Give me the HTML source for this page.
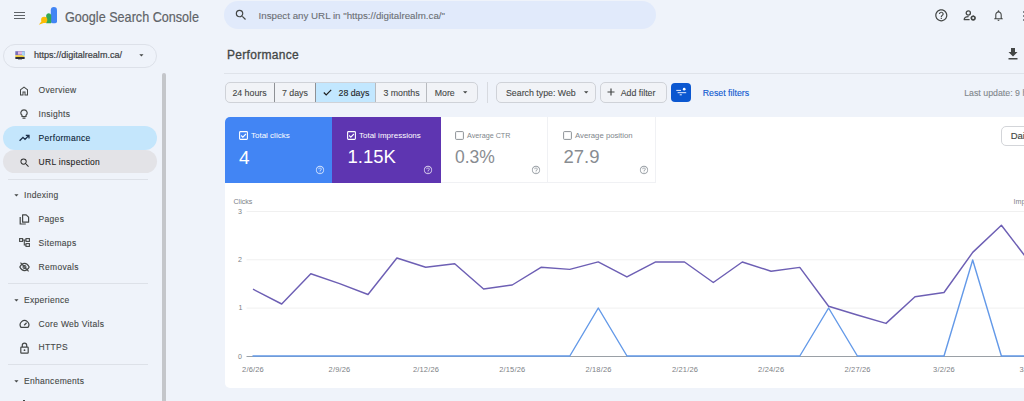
<!DOCTYPE html>
<html><head><meta charset="utf-8">
<style>
*{margin:0;padding:0;box-sizing:border-box;}
html,body{width:1024px;height:401px;overflow:hidden;background:#eff3fa;font-family:"Liberation Sans",sans-serif;color:#444746;}
.a{position:absolute;}
.t{position:absolute;white-space:nowrap;line-height:1;}
.nav{position:absolute;left:38.6px;font-size:8.5px;color:#444746;letter-spacing:0.3px;-webkit-text-stroke:0.1px currentColor;white-space:nowrap;line-height:1;}
.sec{position:absolute;left:24px;font-size:8.5px;color:#444746;letter-spacing:0.3px;-webkit-text-stroke:0.1px currentColor;white-space:nowrap;line-height:1;}
.div{position:absolute;left:8px;width:140px;height:1px;background:#dde1e8;}
.seg{position:absolute;white-space:nowrap;line-height:1;top:92.7px;font-size:8.8px;color:#444746;transform:translateY(-50%);-webkit-text-stroke:0.1px currentColor;}
</style></head><body>

<!-- hamburger -->
<div class="a" style="left:14px;top:11.9px;width:10.5px;height:1.3px;background:#5f6368"></div>
<div class="a" style="left:14px;top:14.9px;width:10.5px;height:1.3px;background:#5f6368"></div>
<div class="a" style="left:14px;top:17.9px;width:10.5px;height:1.3px;background:#5f6368"></div>

<!-- logo -->
<svg class="a" style="left:38px;top:6px" width="20" height="20" viewBox="0 0 20 20">
  <path d="M12.8 15.5V4.2A3.1 3.1 0 0 1 19 4.2V15.5A1.8 1.8 0 0 1 17.2 17.3H14.6A1.8 1.8 0 0 1 12.8 15.5Z" fill="#4285f4"/>
  <path d="M8.2 17.3V8.9A2.7 2.7 0 0 1 13.2 8.9V17.3Z" fill="#34a853"/>
  <circle cx="6.2" cy="13.9" r="3.1" fill="#fbbc04"/>
  <path d="M0.8 18.8L3.6 15.2L5.6 16.9Z" fill="#fbbc04"/>
</svg>
<div class="t" style="left:65px;top:9px;font-size:15px;color:#5f6368;transform-origin:0 0;transform:scaleX(0.841);-webkit-text-stroke:0.2px #5f6368">Google Search Console</div>

<!-- search bar -->
<div class="a" style="left:224px;top:1px;width:432px;height:28px;border-radius:14px;background:#e1eafb"></div>
<svg class="a" style="left:233.85px;top:8.3px" width="14" height="14" viewBox="0 0 24 24"><path fill="#444746" d="M15.5 14h-.79l-.28-.27A6.471 6.471 0 0 0 16 9.500 6.500 6.500 0 1 0 9.500 16c1.610 0 3.090-.59 4.230-1.570l.27.28v.79l5 4.990L20.490 19l-4.990-5zm-6 0C7.010 14 5 11.990 5 9.500S7.010 5 9.500 5 14 7.010 14 9.500 11.990 14 9.500 14z"/></svg>
<div class="t" style="left:258.5px;top:10.5px;font-size:9.75px;color:#6b6f74;-webkit-text-stroke:0.1px #6b6f74">Inspect any URL in "https://digitalrealm.ca/"</div>

<!-- top right icons -->
<svg class="a" style="left:933.8px;top:7.9px" width="14.6" height="14.6" viewBox="0 0 24 24"><path fill="#444746" d="M11 18h2v-2h-2v2zm1-16C6.480 2 2 6.480 2 12s4.480 10 10 10 10-4.480 10-10S17.520 2 12 2zm0 18c-4.410 0-8-3.590-8-8s3.590-8 8-8 8 3.590 8 8-3.590 8-8 8zm0-14c-2.210 0-4 1.790-4 4h2c0-1.100.9-2 2-2s2 .9 2 2c0 2-3 1.750-3 5h2c0-2.250 3-2.500 3-5 0-2.210-1.790-4-4-4z"/></svg>
<svg class="a" style="left:963px;top:10px" width="14" height="11" viewBox="0 0 14 11">
  <circle cx="5.3" cy="3" r="2.1" fill="none" stroke="#444746" stroke-width="1.3"/>
  <path d="M1.2 9.6C1.2 7.4 3.2 6.6 5.6 6.7" fill="none" stroke="#444746" stroke-width="1.3"/>
  <path d="M0.8 9.6H6.6" stroke="#444746" stroke-width="1.3"/>
  <circle cx="10.2" cy="8" r="1.8" fill="none" stroke="#444746" stroke-width="1.5"/>
  <path d="M10.2 5.4V6.2M10.2 9.8V10.6M7.6 8H8.4M12 8H12.8M8.4 6.2L8.9 6.7M11.5 9.3L12 9.8M12 6.2L11.5 6.7M8.9 9.3L8.4 9.8" stroke="#444746" stroke-width="1"/>
</svg>
<svg class="a" style="left:992px;top:8px" width="13" height="15" viewBox="0 0 24 24"><path fill="#444746" d="M12 22c1.100 0 2-.9 2-2h-4c0 1.100.89 2 2 2zm6-6v-5c0-3.070-1.640-5.640-4.500-6.320V4c0-.83-.67-1.500-1.500-1.500s-1.500.67-1.500 1.500v.68C7.630 5.360 6 7.920 6 11v5l-2 2v1h16v-1l-2-2zm-2 1H8v-6c0-2.480 1.510-4.500 4-4.500s4 2.020 4 4.500v6z"/></svg>
<div class="a" style="left:1022.5px;top:10.5px;width:2.5px;height:2.5px;border-radius:50%;background:#5f6368"></div>
<div class="a" style="left:1022.5px;top:14.5px;width:2.5px;height:2.5px;border-radius:50%;background:#5f6368"></div>
<div class="a" style="left:1022.5px;top:18.5px;width:2.5px;height:2.5px;border-radius:50%;background:#5f6368"></div>

<!-- property selector -->
<div class="a" style="left:2.5px;top:43.5px;width:154px;height:24px;border-radius:12px;border:1px solid #dde1e9;background:#eff3fa"></div>
<svg class="a" style="left:14.5px;top:50.5px" width="10" height="9" viewBox="0 0 10 9">
  <rect x="0.3" y="0.2" width="9.4" height="4" fill="#7a6fb8"/>
  <rect x="3" y="0.5" width="4" height="3" fill="#e3b6e0"/>
  <rect x="7" y="0.5" width="2.7" height="5" fill="#a9d4f5"/>
  <path d="M0.3 4.2H7.5L9.7 5.4V6H0.3Z" fill="#f4cf3a"/>
  <rect x="0.3" y="6" width="9.4" height="2" rx="0.4" fill="#2e2e36"/>
  <rect x="3" y="8" width="4" height="0.9" fill="#9a9aa0"/>
</svg>
<div class="t" style="left:34px;top:50.8px;font-size:9.05px;color:#3c4043;-webkit-text-stroke:0.2px #3c4043">https://digitalrealm.ca/</div>
<svg class="a" style="left:139px;top:54px" width="5" height="3" viewBox="0 0 5 3"><path d="M0.3 0.3H4.5L2.4 2.4Z" fill="#444746"/></svg>

<!-- scrollbar -->
<div class="a" style="left:161.5px;top:73px;width:4.5px;height:340px;border-radius:2px;background:#c4c6ca"></div>

<!-- nav -->
<div class="a" style="left:2.5px;top:126px;width:154px;height:24px;border-radius:12px;background:#c4e6fc"></div>
<div class="a" style="left:2.5px;top:150.2px;width:154px;height:23px;border-radius:11.5px;background:#e3e3e7"></div>

<svg class="a" style="left:18px;top:84.5px" width="12" height="12" viewBox="0 0 24 24"><path fill="#444746" d="M6 19h3v-6h6v6h3v-9l-6-4.500L6 10v9Zm-2 2V9l8-6 8 6v12h-7v-6h-2v6H4Z"/></svg>
<div class="nav" style="top:85.8px">Overview</div>
<svg class="a" style="left:20px;top:109px" width="8" height="10" viewBox="0 0 8 10"><path d="M4 0.8A3.1 3.1 0 0 1 6 6.3V7.5H2V6.3A3.1 3.1 0 0 1 4 0.8Z M2.5 9.2H5.5" fill="none" stroke="#444746" stroke-width="1.2"/></svg>
<div class="nav" style="top:109.8px">Insights</div>
<svg class="a" style="left:19px;top:134px" width="11" height="8" viewBox="0 0 11 8"><path d="M0.6 6.8L4 3.4L6 5.4L9.3 2 M6.8 1.3H10V4.5" fill="none" stroke="#1b2f4a" stroke-width="1.3"/></svg>
<div class="nav" style="top:133.8px;color:#0b1d35">Performance</div>
<svg class="a" style="left:18.6px;top:156.8px" width="11.6" height="11.6" viewBox="0 0 24 24"><path fill="#303030" d="M15.5 14h-.79l-.28-.27A6.471 6.471 0 0 0 16 9.500 6.500 6.500 0 1 0 9.500 16c1.610 0 3.090-.59 4.230-1.570l.27.28v.79l5 4.990L20.490 19l-4.990-5zm-6 0C7.010 14 5 11.990 5 9.500S7.010 5 9.500 5 14 7.010 14 9.500 11.990 14 9.500 14z"/></svg>
<div class="nav" style="top:157.8px;color:#1f1f1f">URL inspection</div>

<div class="div" style="top:179px"></div>
<svg class="a" style="left:13.5px;top:194px" width="5" height="3" viewBox="0 0 5 3"><path d="M0.3 0.3H4.5L2.4 2.4Z" fill="#444746"/></svg>
<div class="sec" style="top:190.5px">Indexing</div>
<svg class="a" style="left:18.5px;top:213.5px" width="11" height="11" viewBox="0 0 11 11"><path d="M3.6 0.8H7.2L9.6 3.2V8.2H3.6Z" fill="none" stroke="#444746" stroke-width="1.2" stroke-linejoin="round"/><path d="M1.2 3V10H6.8" fill="none" stroke="#444746" stroke-width="1.2"/></svg>
<div class="nav" style="top:214.5px">Pages</div>
<svg class="a" style="left:18.5px;top:238px" width="11" height="9" viewBox="0 0 11 9"><rect x="0.6" y="0.6" width="3" height="2.8" fill="none" stroke="#444746" stroke-width="1.1"/><rect x="7" y="0.6" width="3.4" height="2.8" fill="none" stroke="#444746" stroke-width="1.1"/><rect x="7" y="5.6" width="3.4" height="2.8" fill="none" stroke="#444746" stroke-width="1.1"/><path d="M3.6 2H7 M5.3 2V7H7" stroke="#444746" stroke-width="1.1" fill="none"/></svg>
<div class="nav" style="top:238.5px">Sitemaps</div>
<svg class="a" style="left:18.5px;top:262px" width="11" height="10" viewBox="0 0 11 10"><path d="M0.8 5C2.2 2.2 3.8 1.4 5.5 1.4S8.8 2.2 10.2 5C8.8 7.8 7.2 8.6 5.5 8.6S2.2 7.8 0.8 5Z" fill="none" stroke="#444746" stroke-width="1.15"/><circle cx="5.5" cy="5" r="1.5" fill="none" stroke="#444746" stroke-width="1.05"/><path d="M1.5 0.7L9.6 9.3" stroke="#444746" stroke-width="1.15"/></svg>
<div class="nav" style="top:262.5px">Removals</div>

<div class="div" style="top:283px"></div>
<svg class="a" style="left:13.5px;top:299px" width="5" height="3" viewBox="0 0 5 3"><path d="M0.3 0.3H4.5L2.4 2.4Z" fill="#444746"/></svg>
<div class="sec" style="top:295.5px">Experience</div>
<svg class="a" style="left:19px;top:319px" width="11" height="10" viewBox="0 0 11 10"><path d="M2 8.3A4.3 4.3 0 1 1 9 8.3Z" fill="none" stroke="#444746" stroke-width="1.2" stroke-linejoin="round"/><path d="M5.2 6.2L7.6 3.8" stroke="#444746" stroke-width="1.3"/></svg>
<div class="nav" style="top:319.5px">Core Web Vitals</div>
<svg class="a" style="left:20px;top:341.5px" width="9" height="12" viewBox="0 0 9 12"><path d="M2.3 5V3.3A2.2 2.2 0 0 1 6.7 3.3V5" fill="none" stroke="#444746" stroke-width="1.2"/><rect x="0.8" y="5.2" width="7.4" height="6" rx="0.6" fill="none" stroke="#444746" stroke-width="1.2"/><circle cx="4.5" cy="8.2" r="0.9" fill="#444746"/></svg>
<div class="nav" style="top:343.4px">HTTPS</div>

<div class="div" style="top:364px"></div>
<svg class="a" style="left:13.5px;top:379.5px" width="5" height="3" viewBox="0 0 5 3"><path d="M0.3 0.3H4.5L2.4 2.4Z" fill="#444746"/></svg>
<div class="sec" style="top:376.5px">Enhancements</div>
<div class="a" style="left:23.2px;top:399.8px;width:2.2px;height:1.2px;background:#444746"></div>

<!-- main header -->
<div class="t" style="left:227px;top:48.9px;font-size:12px;color:#444746;letter-spacing:0.3px;-webkit-text-stroke:0.3px #444746">Performance</div>
<svg class="a" style="left:1007px;top:47px" width="12" height="13" viewBox="0 0 12 13"><path d="M4 1H8V5H10.5L6 9.5L1.5 5H4Z" fill="#444746"/><rect x="1.5" y="11" width="9" height="1.5" fill="#444746"/></svg>
<div class="a" style="left:224px;top:73px;width:800px;height:1px;background:#dfe3ea"></div>

<!-- segmented -->
<div class="a" style="left:225px;top:82px;width:253px;height:21px;border:1px solid #cfd2d8;border-radius:5px;background:#f1f3f7;overflow:hidden">
  <div class="a" style="left:89px;top:0;width:60px;height:19px;background:#c2e7ff"></div>
  <div class="a" style="left:48px;top:0;width:1px;height:19px;background:#8e9196"></div>
  <div class="a" style="left:89px;top:0;width:1px;height:19px;background:#8e9196"></div>
  <div class="a" style="left:149px;top:0;width:1px;height:19px;background:#b7babf"></div>
  <div class="a" style="left:200px;top:0;width:1px;height:19px;background:#b7babf"></div>
</div>
<div class="seg" style="left:232.4px">24 hours</div>
<div class="seg" style="left:282px">7 days</div>
<svg class="a" style="left:323px;top:88.5px" width="9" height="7" viewBox="0 0 9 7"><path d="M0.8 3.5L3.2 5.9L8.2 0.9" fill="none" stroke="#1f1f1f" stroke-width="1.2"/></svg>
<div class="seg" style="left:338.5px;color:#1f1f1f">28 days</div>
<div class="seg" style="left:383.4px">3 months</div>
<div class="seg" style="left:434.7px">More</div>
<svg class="a" style="left:463px;top:91px" width="5" height="3" viewBox="0 0 5 3"><path d="M0 0.3H4.4L2.2 2.5Z" fill="#444746"/></svg>

<div class="a" style="left:486.5px;top:82px;width:1px;height:21px;background:#d7dae0"></div>
<div class="a" style="left:496px;top:82px;width:100px;height:21px;border:1px solid #cfd2d8;border-radius:5px;background:#f1f3f7"></div>
<div class="seg" style="left:506px">Search type: Web</div>
<svg class="a" style="left:583.5px;top:91px" width="5" height="3" viewBox="0 0 5 3"><path d="M0 0.3H4.4L2.2 2.5Z" fill="#444746"/></svg>
<div class="a" style="left:600px;top:82px;width:67px;height:21px;border:1px solid #cfd2d8;border-radius:5px;background:#f1f3f7"></div>
<svg class="a" style="left:606.5px;top:88px" width="8" height="8" viewBox="0 0 8 8"><path d="M4 0.5V7.5M0.5 4H7.5" stroke="#444746" stroke-width="1.2"/></svg>
<div class="seg" style="left:620.7px">Add filter</div>
<div class="a" style="left:670.5px;top:82.5px;width:20px;height:19px;border-radius:4px;background:#0b57d0"></div>
<svg class="a" style="left:675px;top:86px" width="13" height="11" viewBox="0 0 13 11"><path d="M1.3 4.4H6 M2.6 6.7H11.2 M4.7 8.8H6.8" stroke="#e8efff" stroke-width="1"/><circle cx="9.2" cy="3.2" r="1.35" fill="#fff"/></svg>
<div class="seg" style="left:702.7px;color:#0b57d0">Reset filters</div>
<div class="seg" style="left:964.2px;color:#80868b">Last update: 9 hours ago</div>

<!-- chart card -->
<div class="a" style="left:224.5px;top:116.5px;width:820px;height:271px;border-radius:5px;background:#fff"></div>
<div class="a" style="left:224.5px;top:116.5px;width:107.5px;height:66px;border-top-left-radius:5px;background:#4285f4"></div>
<div class="a" style="left:332px;top:116.5px;width:108.5px;height:66px;background:#5e35b1"></div>
<div class="a" style="left:440.5px;top:116.5px;width:107.5px;height:66px;border:1px solid #f0f1f4;border-top:none;border-left:none"></div>
<div class="a" style="left:548px;top:116.5px;width:108px;height:66px;border:1px solid #f0f1f4;border-top:none;border-left:none"></div>

<!-- card contents -->
<svg class="a" style="left:238.5px;top:131px" width="9" height="9" viewBox="0 0 9 9"><rect x="0.6" y="0.6" width="7.8" height="7.8" rx="0.8" fill="none" stroke="#fff" stroke-width="1.1"/><path d="M2.2 4.5L3.8 6.1L6.9 3" fill="none" stroke="#fff" stroke-width="1.1"/></svg>
<div class="t" style="left:251px;top:131.8px;font-size:8px;color:#fff">Total clicks</div>
<div class="t" style="left:239px;top:148px;font-size:19px;color:#fff">4</div>
<svg class="a" style="left:315px;top:165px" width="10" height="10" viewBox="0 0 24 24"><path fill="rgba(255,255,255,0.75)" d="M11 18h2v-2h-2v2zm1-16C6.480 2 2 6.480 2 12s4.480 10 10 10 10-4.480 10-10S17.520 2 12 2zm0 18c-4.410 0-8-3.590-8-8s3.590-8 8-8 8 3.590 8 8-3.590 8-8 8zm0-14c-2.210 0-4 1.790-4 4h2c0-1.100.9-2 2-2s2 .9 2 2c0 2-3 1.750-3 5h2c0-2.250 3-2.500 3-5 0-2.210-1.790-4-4-4z"/></svg>

<svg class="a" style="left:346.5px;top:131px" width="9" height="9" viewBox="0 0 9 9"><rect x="0.6" y="0.6" width="7.8" height="7.8" rx="0.8" fill="none" stroke="#fff" stroke-width="1.1"/><path d="M2.2 4.5L3.8 6.1L6.9 3" fill="none" stroke="#fff" stroke-width="1.1"/></svg>
<div class="t" style="left:359px;top:131.8px;font-size:8px;color:#fff">Total impressions</div>
<div class="t" style="left:347.5px;top:148px;font-size:18.5px;color:#fff">1.15K</div>
<svg class="a" style="left:423px;top:165px" width="10" height="10" viewBox="0 0 24 24"><path fill="rgba(255,255,255,0.75)" d="M11 18h2v-2h-2v2zm1-16C6.480 2 2 6.480 2 12s4.480 10 10 10 10-4.480 10-10S17.520 2 12 2zm0 18c-4.410 0-8-3.590-8-8s3.590-8 8-8 8 3.590 8 8-3.590 8-8 8zm0-14c-2.210 0-4 1.790-4 4h2c0-1.100.9-2 2-2s2 .9 2 2c0 2-3 1.750-3 5h2c0-2.250 3-2.500 3-5 0-2.210-1.790-4-4-4z"/></svg>

<svg class="a" style="left:454.5px;top:131px" width="9" height="9" viewBox="0 0 9 9"><rect x="0.6" y="0.6" width="7.8" height="7.8" rx="0.8" fill="none" stroke="#80868b" stroke-width="0.9"/></svg>
<div class="t" style="left:467px;top:132px;font-size:7.2px;color:#80868b">Average CTR</div>
<div class="t" style="left:455px;top:149px;font-size:17.5px;color:#888c91">0.3%</div>
<svg class="a" style="left:531px;top:165px" width="10" height="10" viewBox="0 0 24 24"><path fill="#9aa0a6" d="M11 18h2v-2h-2v2zm1-16C6.480 2 2 6.480 2 12s4.480 10 10 10 10-4.480 10-10S17.520 2 12 2zm0 18c-4.410 0-8-3.590-8-8s3.590-8 8-8 8 3.590 8 8-3.590 8-8 8zm0-14c-2.210 0-4 1.790-4 4h2c0-1.100.9-2 2-2s2 .9 2 2c0 2-3 1.750-3 5h2c0-2.250 3-2.500 3-5 0-2.210-1.790-4-4-4z"/></svg>

<svg class="a" style="left:562.5px;top:131px" width="9" height="9" viewBox="0 0 9 9"><rect x="0.6" y="0.6" width="7.8" height="7.8" rx="0.8" fill="none" stroke="#80868b" stroke-width="0.9"/></svg>
<div class="t" style="left:575px;top:132px;font-size:7.75px;color:#80868b">Average position</div>
<div class="t" style="left:563.5px;top:148px;font-size:18.5px;color:#888c91">27.9</div>
<svg class="a" style="left:639px;top:165px" width="10" height="10" viewBox="0 0 24 24"><path fill="#9aa0a6" d="M11 18h2v-2h-2v2zm1-16C6.480 2 2 6.480 2 12s4.480 10 10 10 10-4.480 10-10S17.520 2 12 2zm0 18c-4.410 0-8-3.590-8-8s3.590-8 8-8 8 3.590 8 8-3.590 8-8 8zm0-14c-2.210 0-4 1.790-4 4h2c0-1.100.9-2 2-2s2 .9 2 2c0 2-3 1.750-3 5h2c0-2.250 3-2.500 3-5 0-2.210-1.790-4-4-4z"/></svg>

<!-- Daily button -->
<div class="a" style="left:1000.5px;top:126px;width:60px;height:19.5px;border:1px solid #d3d5d9;border-radius:5px"></div>
<div class="t" style="left:1010.7px;top:130.7px;font-size:9.5px;color:#444746;-webkit-text-stroke:0.15px #444746">Daily</div>

<!-- chart -->
<svg class="a" style="left:0;top:0" width="1024" height="401" viewBox="0 0 1024 401">
  <g font-family="Liberation Sans" font-size="7.1" fill="#7d8186">
    <text x="233.5" y="204">Clicks</text>
    <text x="1013.5" y="204">Impressions</text>
    <text x="238" y="214.2">3</text>
    <text x="238" y="262.3">2</text>
    <text x="238.5" y="310.4">1</text>
    <text x="238" y="358.7">0</text>
  </g>
  <g stroke="#f0f0f0" stroke-width="1">
    <line x1="246.5" y1="211.5" x2="1024" y2="211.5"/>
    <line x1="246.5" y1="259.8" x2="1024" y2="259.8"/>
    <line x1="246.5" y1="308.1" x2="1024" y2="308.1"/>
  </g>
  <line x1="246.5" y1="356.5" x2="1024" y2="356.5" stroke="#9aa0a6" stroke-width="1"/>
  <g font-family="Liberation Sans" font-size="7.5" fill="#7d8186" text-anchor="middle" letter-spacing="0.17">
    <text x="253" y="371.5">2/6/26</text>
    <text x="339.5" y="371.5">2/9/26</text>
    <text x="426" y="371.5">2/12/26</text>
    <text x="512.3" y="371.5">2/15/26</text>
    <text x="598.5" y="371.5">2/18/26</text>
    <text x="685" y="371.5">2/21/26</text>
    <text x="771.2" y="371.5">2/24/26</text>
    <text x="857.6" y="371.5">2/27/26</text>
    <text x="944" y="371.5">3/2/26</text>
    <text x="1030.5" y="371.5">3/5/26</text>
  </g>
  <polyline fill="none" stroke="#6399e8" stroke-width="1.4" stroke-linejoin="round"
    points="252.5,356 569.8,356 598.3,308 627,356 799.8,356 828.6,308 857.4,356 944,356 972.7,260 1001.4,356 1030,356"/>
  <polyline fill="none" stroke="#6d5fb4" stroke-width="1.45" stroke-linejoin="round"
    points="253,289.2 281.7,304 310.8,273.8 339.6,283.6 368,294.5 396.9,258 425.7,267.3 454.7,263.8 483.6,289 512.2,285 541,267.3 569.8,269.4 598.2,261.9 626.9,276.9 655.7,261.9 684.5,262 713.3,282.5 742.3,262 771.1,271.2 799.8,267.4 828.6,306.2 857.3,315 886,323.4 915,296.7 944,292.5 972.7,252.4 1001.4,225.3 1030,262.5"/>
</svg>

</body></html>
